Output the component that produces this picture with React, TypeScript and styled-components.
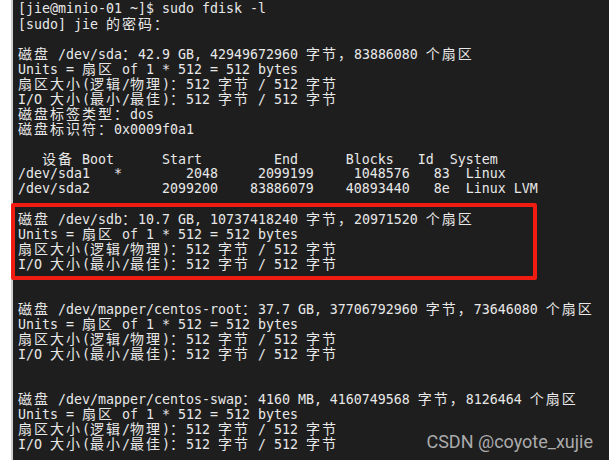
import React from "react";
import styled, { createGlobalStyle } from "styled-components";

const Global = createGlobalStyle`
  html, body { margin: 0; padding: 0; background: #ffffff; }
  #root { width: 609px; height: 460px; overflow: hidden; }
`;

const Page = styled.div`
  display: flex;
  width: 609px;
  height: 460px;
  background: #ffffff;
`;

const Gutter = styled.div`
  width: 11px;
  flex: none;
  background: #ffffff;
  border-right: 2px solid #cfcfcf;
`;

const Terminal = styled.div`
  position: relative;
  flex: 1;
  background: #1e1e1e;
  padding: 1px 0 0 5px;
  color: #e8e8e8;
  font-family: "DejaVu Sans Mono", "Noto Sans CJK SC", monospace;
  font-size: 13.29px;
  line-height: 15px;
`;

const Line = styled.div`
  height: 15px;
  white-space: pre;
`;

const Wide = styled.span`
  display: inline-block;
  height: 15px;
  line-height: 15px;
  font-family: "Noto Sans CJK SC", sans-serif;
  font-size: 14px;
  letter-spacing: 2px;
`;

const Highlight = styled.div`
  box-sizing: border-box;
  width: 526px;
  margin: -8px 0 -9px -7px;
  padding: 4px 0 5px 3px;
  border: 4px solid #f01c12;
  border-radius: 2px;
`;

const Watermark = styled.div`
  position: absolute;
  right: 16px;
  bottom: 11px;
  font-family: Roboto, "Liberation Sans", sans-serif;
  font-size: 18px;
  color: #ababab;
`;

const CJK = /([\u3000-\u303f\u4e00-\u9fff\uff00-\uffef]+)/;

function Text({ s }: { s: string }) {
  const parts = s.split(CJK);
  return (
    <>
      {parts.map((p, i) =>
        i % 2 === 1 ? <Wide key={i}>{p}</Wide> : <React.Fragment key={i}>{p}</React.Fragment>
      )}
    </>
  );
}

const head = [
  "[jie@minio-01 ~]$ sudo fdisk -l",
  "[sudo] jie 的密码：",
  "",
  "磁盘 /dev/sda：42.9 GB, 42949672960 字节，83886080 个扇区",
  "Units = 扇区 of 1 * 512 = 512 bytes",
  "扇区大小(逻辑/物理)：512 字节 / 512 字节",
  "I/O 大小(最小/最佳)：512 字节 / 512 字节",
  "磁盘标签类型：dos",
  "磁盘标识符：0x0009f0a1",
  "",
  "   设备 Boot      Start         End      Blocks   Id  System",
  "/dev/sda1   *        2048     2099199     1048576   83  Linux",
  "/dev/sda2         2099200    83886079    40893440   8e  Linux LVM",
  "",
];

const boxed = [
  "磁盘 /dev/sdb：10.7 GB, 10737418240 字节，20971520 个扇区",
  "Units = 扇区 of 1 * 512 = 512 bytes",
  "扇区大小(逻辑/物理)：512 字节 / 512 字节",
  "I/O 大小(最小/最佳)：512 字节 / 512 字节",
];

const tail = [
  "",
  "",
  "磁盘 /dev/mapper/centos-root：37.7 GB, 37706792960 字节，73646080 个扇区",
  "Units = 扇区 of 1 * 512 = 512 bytes",
  "扇区大小(逻辑/物理)：512 字节 / 512 字节",
  "I/O 大小(最小/最佳)：512 字节 / 512 字节",
  "",
  "",
  "磁盘 /dev/mapper/centos-swap：4160 MB, 4160749568 字节，8126464 个扇区",
  "Units = 扇区 of 1 * 512 = 512 bytes",
  "扇区大小(逻辑/物理)：512 字节 / 512 字节",
  "I/O 大小(最小/最佳)：512 字节 / 512 字节",
];

export default function App() {
  return (
    <Page>
      <Global />
      <Gutter />
      <Terminal>
        {head.map((s, i) => (
          <Line key={"h" + i}><Text s={s} /></Line>
        ))}
        <Highlight>
          {boxed.map((s, i) => (
            <Line key={"b" + i}><Text s={s} /></Line>
          ))}
        </Highlight>
        {tail.map((s, i) => (
          <Line key={"t" + i}><Text s={s} /></Line>
        ))}
        <Watermark>CSDN @coyote_xujie</Watermark>
      </Terminal>
    </Page>
  );
}
